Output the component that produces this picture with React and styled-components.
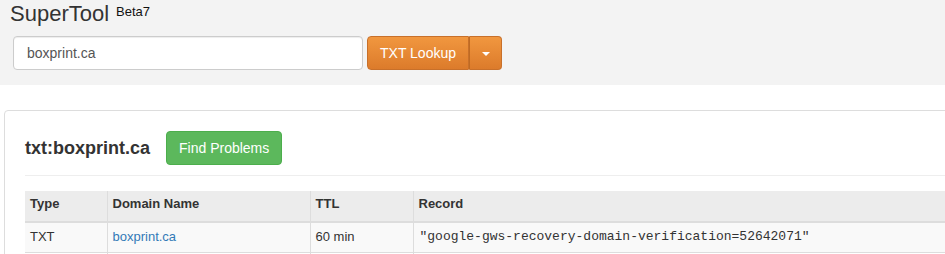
import styled, {createGlobalStyle} from "styled-components"

const GlobalStyle = createGlobalStyle`
    html, body {
        margin: 0;
        padding: 0;
        background: #fff;
        overflow: hidden;
    }

    body {
        font-family: "Liberation Sans", Arial, sans-serif;
        font-size: 14px;
        color: #333;
    }
`

const Header = styled.header`
    background: #f3f3f3;
    padding: 0 10px 15px;
`

const Brand = styled.div`
    display: flex;
    align-items: flex-start;
    height: 36px;
`

const Title = styled.h1`
    margin: 0;
    font-size: 22px;
    font-weight: 400;
    line-height: 28px;
    color: #333;
`

const Badge = styled.span`
    margin: 5px 0 0 7px;
    font-size: 13px;
    line-height: 14px;
    color: #111;
`

const SearchForm = styled.form`
    display: flex;
    gap: 4px;
    padding-left: 3px;
`

const Input = styled.input`
    box-sizing: border-box;
    width: 350px;
    height: 34px;
    padding: 6px 13px;
    border: 1px solid #ccc;
    border-radius: 4px;
    background: #fff;
    font-family: inherit;
    font-size: 14px;
    color: #555;
    box-shadow: inset 0 1px 1px rgba(0, 0, 0, 0.075);
    outline: none;
`

const SplitButton = styled.div`
    display: flex;
    height: 34px;
`

const OrangeButton = styled.button`
    box-sizing: border-box;
    height: 34px;
    padding: 0 12px;
    width: ${({caret}) => (caret ? "33px" : "102px")};
    border: 1px solid #c8702a;
    border-left-color: ${({caret}) => (caret ? "#bf6a22" : "#c8702a")};
    border-radius: ${({caret}) => (caret ? "0 4px 4px 0" : "4px 0 0 4px")};
    background: linear-gradient(to bottom, #f1973f 0%, #dc7b2b 100%);
    color: #fff;
    font-family: inherit;
    font-size: 14px;
    display: flex;
    align-items: center;
    justify-content: center;
`

const Caret = styled.span`
    width: 0;
    height: 0;
    border-left: 4px solid transparent;
    border-right: 4px solid transparent;
    border-top: 4px solid #fff;
    margin-top: 2px;
`

const Panel = styled.section`
    box-sizing: border-box;
    width: 1100px;
    margin: 25px 0 0 4px;
    padding: 20px;
    border: 1px solid #ddd;
    border-radius: 4px;
    background: #fff;
`

const PanelHead = styled.div`
    display: flex;
    align-items: center;
    gap: 16px;
    padding-bottom: 10px;
    border-bottom: 1px solid #eee;
`

const Heading = styled.h2`
    margin: 0;
    font-size: 18px;
    font-weight: 700;
    color: #333;
`

const GreenButton = styled.button`
    box-sizing: border-box;
    height: 34px;
    padding: 0 12px;
    border: 1px solid #4cae4c;
    border-radius: 4px;
    background: #5cb85c;
    color: #fff;
    font-family: inherit;
    font-size: 14px;
`

const Table = styled.table`
    margin-top: 15px;
    width: 100%;
    border-collapse: collapse;
    table-layout: fixed;
    font-size: 13px;
    line-height: 18px;
`

const Th = styled.th`
    padding: 4px 5px 8px;
    text-align: left;
    font-weight: 700;
    background: #ececec;
    border-bottom: 2px solid #ddd;
    border-left: 1px solid #ddd;

    &:first-child {
        border-left: none;
    }
`

const Td = styled.td`
    height: 18px;
    padding: 4px 5px 6px;
    background: ${({striped}) => (striped ? "#f9f9f9" : "#fff")};
    border-bottom: 1px solid #ddd;
    border-left: 1px solid #ddd;
    color: #333;

    &:first-child {
        border-left: none;
    }
`

const Link = styled.a`
    color: #337ab7;
    text-decoration: none;
`

const Mono = styled.span`
    padding-left: 1px;
    font-family: "Liberation Mono", "Courier New", monospace;
    font-size: 13px;
`

const records = [
    {
        type: "TXT",
        domain: "boxprint.ca",
        ttl: "60 min",
        record: "\"google-gws-recovery-domain-verification=52642071\"",
    },
]

const App = () => {
    return (
        <>
            <GlobalStyle />
            <Header>
                <Brand>
                    <Title>SuperTool</Title>
                    <Badge>Beta7</Badge>
                </Brand>
                <SearchForm onSubmit={(e) => e.preventDefault()}>
                    <Input defaultValue="boxprint.ca" />
                    <SplitButton>
                        <OrangeButton type="submit">TXT Lookup</OrangeButton>
                        <OrangeButton type="button" caret>
                            <Caret />
                        </OrangeButton>
                    </SplitButton>
                </SearchForm>
            </Header>

            <Panel>
                <PanelHead>
                    <Heading>txt:boxprint.ca</Heading>
                    <GreenButton>Find Problems</GreenButton>
                </PanelHead>

                <Table>
                    <colgroup>
                        <col style={{width: 82}} />
                        <col style={{width: 203}} />
                        <col style={{width: 103}} />
                        <col />
                    </colgroup>
                    <thead>
                        <tr>
                            <Th>Type</Th>
                            <Th>Domain Name</Th>
                            <Th>TTL</Th>
                            <Th>Record</Th>
                        </tr>
                    </thead>
                    <tbody>
                        {records.map((r) => (
                            <tr key={r.record}>
                                <Td striped>{r.type}</Td>
                                <Td striped>
                                    <Link href="#">{r.domain}</Link>
                                </Td>
                                <Td striped>{r.ttl}</Td>
                                <Td striped>
                                    <Mono>{r.record}</Mono>
                                </Td>
                            </tr>
                        ))}
                        <tr>
                            <Td />
                            <Td />
                            <Td />
                            <Td />
                        </tr>
                    </tbody>
                </Table>
            </Panel>
        </>
    )
}

export default App
